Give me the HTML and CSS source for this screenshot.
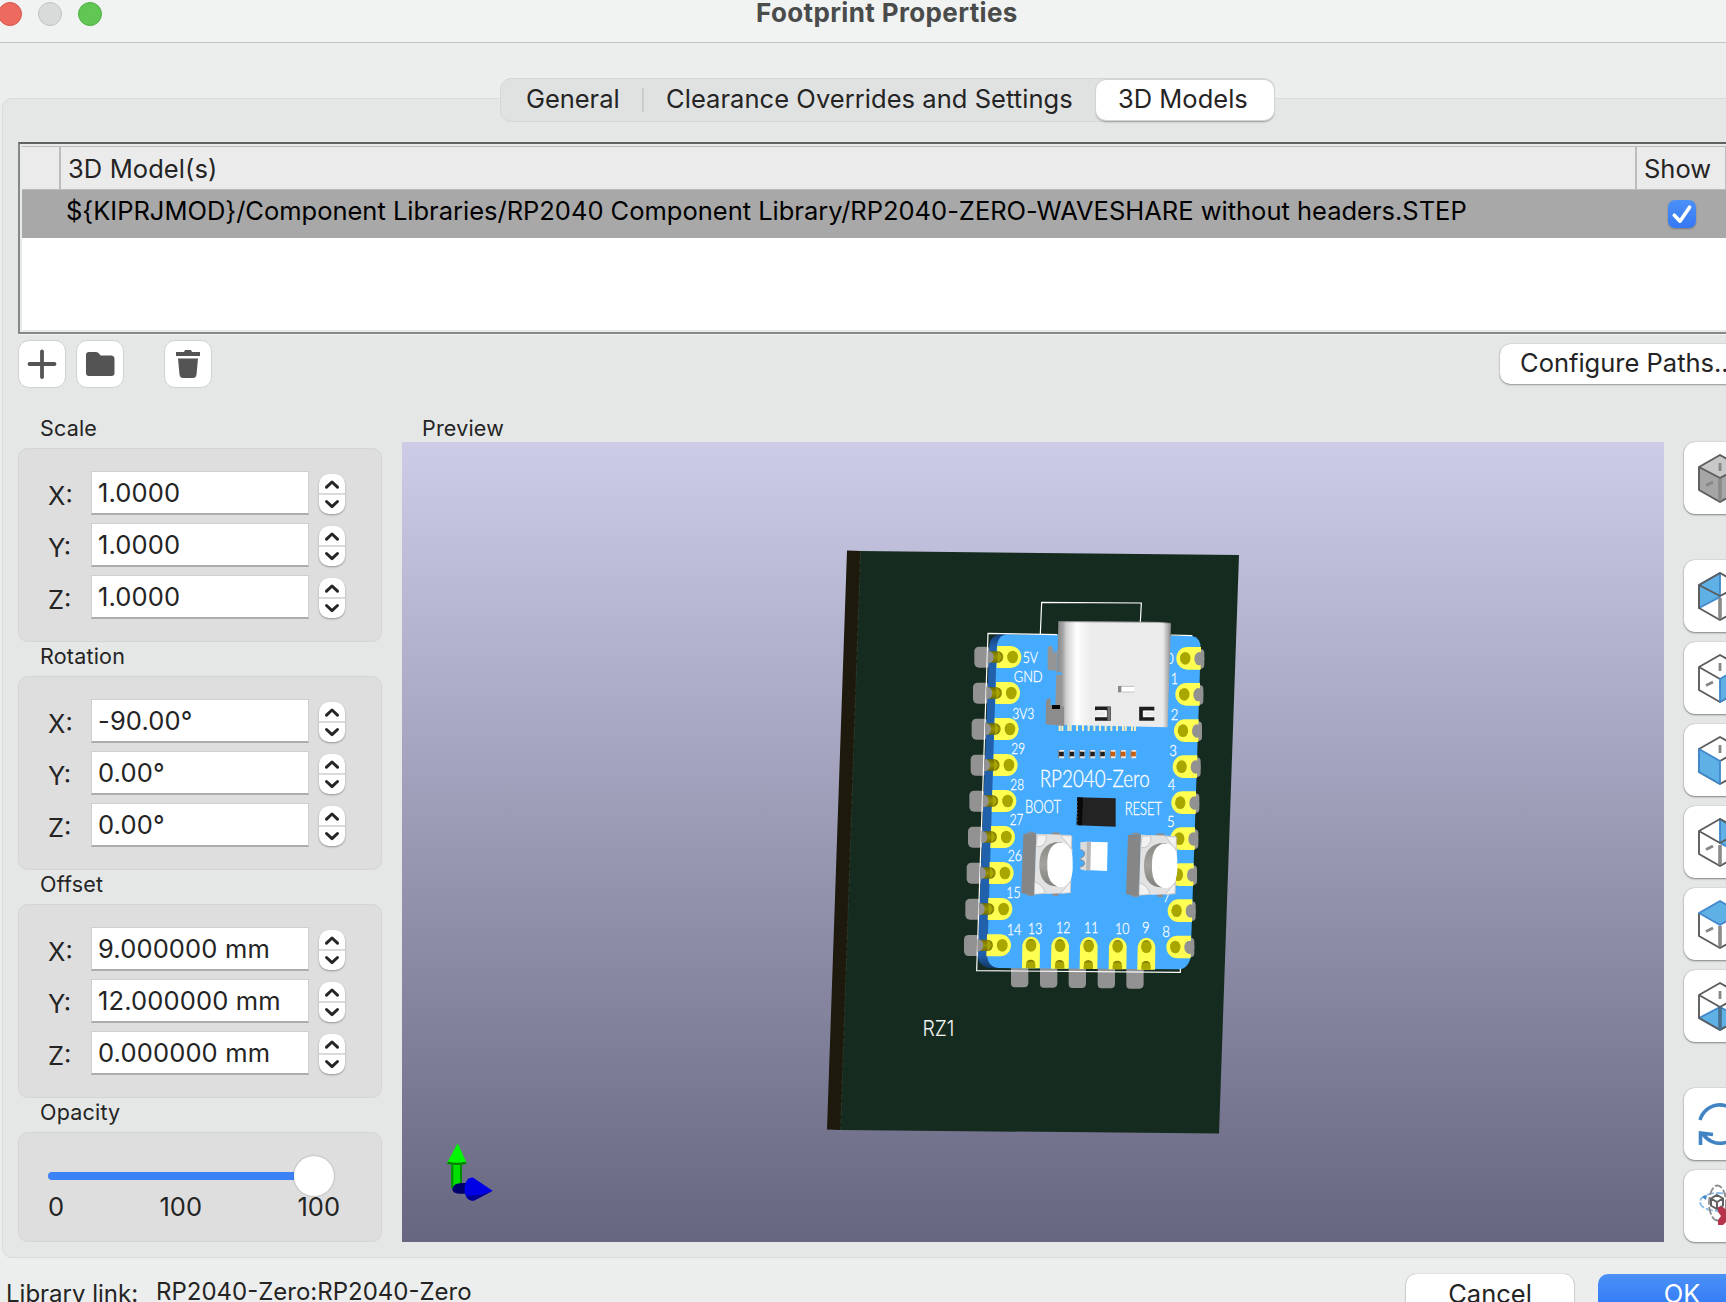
FILE: index.html
```html
<!DOCTYPE html>
<html lang="en">
<head>
<meta charset="utf-8">
<title>Footprint Properties</title>
<link rel="stylesheet" href="styles.css">
</head>
<body>
<svg class="defs" width="0" height="0" aria-hidden="true">
  <symbol id="step" viewBox="0 0 26 40"><path d="M0 20H26" stroke="#cfcfcf" stroke-width="1.6"/><path d="M7.5 13.2L13 8l5.500 5.200M7.500 27.500L13 32.700l5.500-5.200" fill="none" stroke="#262626" stroke-width="3" stroke-linecap="round" stroke-linejoin="round"/></symbol>
</svg>
<div class="window">
  <header class="titlebar">
    <div class="lights"><i class="red"></i><i class="grey"></i><i class="green"></i></div>
    <h1>Footprint Properties</h1>
  </header>

  <nav class="tabs">
    <button class="tab general">General</button>
    <span class="tab-sep"></span>
    <button class="tab clearance">Clearance Overrides and Settings</button>
    <button class="tab selected">3D Models</button>
  </nav>

  <main class="panel">
    <section class="grid">
      <div class="grid-head"><span class="c0"></span><span class="c1">3D Model(s)</span><span class="c2">Show</span></div>
      <div class="grid-row"><span class="path">${KIPRJMOD}/Component Libraries/RP2040 Component Library/RP2040-ZERO-WAVESHARE without headers.STEP</span>
        <span class="check"><svg width="28" height="28" viewBox="0 0 28 28"><path d="M6.300 15.200L12 21.200L21.600 7.200" fill="none" stroke="#fff" stroke-width="3.600" stroke-linecap="round" stroke-linejoin="round"/></svg></span></div>
    </section>

    <div class="toolbar">
      <button class="tool"><svg width="48" height="48" viewBox="0 0 48 48"><path d="M24 11.500V37M11.500 24H36.500" stroke="#545454" stroke-width="3.800" stroke-linecap="round"/></svg></button>
      <button class="tool"><svg width="48" height="48" viewBox="0 0 48 48"><path d="M10 15q0-3 3-3h7q2 0 3 1.500l1.500 2H35q3.500 0 3.500 3.500V33q0 3-3 3H13q-3 0-3-3Z" fill="#545454"/></svg></button>
      <button class="tool trash"><svg width="48" height="48" viewBox="0 0 48 48"><path d="M12 12h8l1-2h6l1 2h8v4H12ZM14 18.500h20l-1.500 16q-.4 3.500-3.500 3.500H19q-3 0-3.500-3.500Z" fill="#545454"/></svg></button>
      <button class="configure">Configure Paths...</button>
    </div>

    <div class="body">
      <aside class="params">
        <h2>Scale</h2>
        <div class="group">
          <label><b>X:</b><span class="field">1.0000</span><svg class="stepper"><use href="#step"/></svg></label>
          <label><b>Y:</b><span class="field">1.0000</span><svg class="stepper"><use href="#step"/></svg></label>
          <label><b>Z:</b><span class="field">1.0000</span><svg class="stepper"><use href="#step"/></svg></label>
        </div>
        <h2>Rotation</h2>
        <div class="group">
          <label><b>X:</b><span class="field">-90.00°</span><svg class="stepper"><use href="#step"/></svg></label>
          <label><b>Y:</b><span class="field">0.00°</span><svg class="stepper"><use href="#step"/></svg></label>
          <label><b>Z:</b><span class="field">0.00°</span><svg class="stepper"><use href="#step"/></svg></label>
        </div>
        <h2>Offset</h2>
        <div class="group">
          <label><b>X:</b><span class="field">9.000000 mm</span><svg class="stepper"><use href="#step"/></svg></label>
          <label><b>Y:</b><span class="field">12.000000 mm</span><svg class="stepper"><use href="#step"/></svg></label>
          <label><b>Z:</b><span class="field">0.000000 mm</span><svg class="stepper"><use href="#step"/></svg></label>
        </div>
        <h2>Opacity</h2>
        <div class="group opacity">
          <div class="slider"><span class="track"></span><span class="knob"></span></div>
          <div class="ticks"><span>0</span><span>100</span><span>100</span></div>
        </div>
      </aside>

      <section class="preview">
        <h2>Preview</h2>
        <svg class="canvas" width="1262" height="800" viewBox="402 442 1262 800">
          <defs>
            <linearGradient id="sky" x2="0" y2="1"><stop stop-color="#cccce8"/><stop offset="1" stop-color="#666680"/></linearGradient>
            <linearGradient id="shell"><stop stop-color="#7e7e7e"/><stop offset=".06" stop-color="#a4a4a4"/><stop offset=".09" stop-color="#d0d0d0"/><stop offset=".18" stop-color="#fff"/><stop offset=".24" stop-color="#f4f4f4"/><stop offset=".3" stop-color="#ececec"/><stop offset=".93" stop-color="#ebebeb"/><stop offset=".97" stop-color="#b4b4b4"/><stop offset="1" stop-color="#858585"/></linearGradient>
            <linearGradient id="cap" x2="0" y2="1"><stop stop-color="#8a8a86"/><stop offset=".5" stop-color="#a3a29c"/><stop offset="1" stop-color="#80807c"/></linearGradient>
            <linearGradient id="tube" x2="0" y2="1"><stop stop-color="#6f6c00"/><stop offset=".5" stop-color="#989400"/><stop offset="1" stop-color="#6f6c00"/></linearGradient>
            <linearGradient id="edge" x2="0" y2="1"><stop stop-color="#123e78"/><stop offset=".04" stop-color="#2160ab"/><stop offset=".96" stop-color="#2160ab"/><stop offset="1" stop-color="#123866"/></linearGradient>
            <g id="lp">
              <path d="M-46 -33H-6A32 33 0 0 1 -6 33H-48Z" fill="#ffff52"/>
              <path d="M-72 -17H-44A16 17 0 0 1 -44 17H-72Z" fill="url(#tube)"/>
              <path d="M-45 -16A15 17 0 0 1 -45 16Z" fill="#aaa600"/>
              <path d="M-75 -19Q-57 -17 -57 0T-75 19Z" fill="#929292"/>
              <ellipse rx="16" ry="19" fill="#aaa600"/><path d="M-8 -16A16 19 0 0 0 -8 16A22 22 0 0 1 -8 -16Z" fill="#827e00"/>
            </g>
            <g id="lg"><rect x="-115" y="-31" width="50" height="63" rx="14" fill="#929292"/></g>
            <g id="rg"><rect x="24" y="-28" width="33" height="59" rx="12" fill="#929292"/></g>
            <g id="rp">
              <path d="M6 -34H47L46 34H6A33 34 0 0 1 6 -34Z" fill="#ffff52"/>
              <ellipse cx="42" cy="1" rx="15" ry="20" fill="#929292"/>
              <ellipse rx="15.500" ry="19" fill="#aaa600"/><path d="M-8 -16A16 19 0 0 0 -8 16A22 22 0 0 1 -8 -16Z" fill="#827e00"/>
            </g>
            <g id="bp">
              <path d="M-26 0A27 33 0 0 1 27 0L26 69H-27Z" fill="#ffff52"/>
              <ellipse rx="16" ry="19" fill="#aaa600"/><path d="M-15 69Q-18 44 -1 43Q16 44 13 69Z" fill="#aaa600"/>
              <path d="M-13 -11A16 19 0 0 1 13 -11A18 14 0 0 0 -13 -11ZM-14 52Q-12 44 -1 43Q10 44 12 52Q0 45 -14 52Z" fill="#827e00"/>
            </g>
            <g id="bg"><path d="M-60 66H-8V113Q-9 126 -20 126H-49Q-60 126 -60 114Z" fill="#929292"/></g>
            <g id="sw">
              <path d="M200 730q2-7 20-5l6 5M272 734q2-10 28-6v8M197 910q2 10 24 8v-9M275 910q0 11 20 8v-9" fill="#8e8e8e"/>
              <path d="M190 732L229 729L223 915L184 910Z" fill="#868686"/>
              <path d="M229 731L333 735L337 780L332 909L223 913Z" fill="#e2e2e2"/>
              <path d="M232 735H258Q263 750 250 765Q240 772 228 770ZM302 736L336 738L334 776ZM224 876Q246 880 257 910L223 913ZM332 874L331 908L301 911Z" fill="#f2f2f2" stroke="#b4b4b4" stroke-width="2"/>
              <path d="M305 757H284Q238 768 238 824T280 888L305 891Z" fill="url(#cap)"/>
              <path d="M294 758H310Q338 768 338 812V838Q335 884 308 891H294Q264 880 262 838V812Q264 768 294 758Z" fill="#fff"/>
            </g>
          </defs>
          <rect x="402" y="442" width="1262" height="800" fill="url(#sky)"/>
          <path d="M847 550.500L861 551L841 1130L827 1129.500Z" fill="#1d190c"/>
          <path d="M860.500 551L1239 555L1219 1133.500L840.500 1130Z" fill="#162b1f"/>
          <path d="M860.500 551L840.500 1130" stroke="#39402f" stroke-width=".6" stroke-dasharray="5 3"/>
          <text class="silk" x="922.500" y="1035.500" font-size="22" textLength="32" lengthAdjust="spacingAndGlyphs">RZ1</text>

          <g transform="translate(960 590) scale(.33333)">
            <use href="#lg" x="158" y="201"/><use href="#lg" x="154" y="309"/><use href="#lg" x="150" y="417"/><use href="#lg" x="147" y="525"/><use href="#lg" x="143" y="633"/><use href="#lg" x="139" y="741"/><use href="#lg" x="135" y="849"/><use href="#lg" x="131" y="957"/><use href="#lg" x="127" y="1066"/>
            <use href="#rg" x="676" y="205"/><use href="#rg" x="673" y="313"/><use href="#rg" x="669" y="422"/><use href="#rg" x="665" y="530"/><use href="#rg" x="661" y="638"/><use href="#rg" x="658" y="746"/><use href="#rg" x="654" y="854"/><use href="#rg" x="650" y="962"/><use href="#rg" x="646" y="1071"/>
            <use href="#bg" x="213" y="1066"/><use href="#bg" x="300" y="1067"/><use href="#bg" x="386" y="1068"/><use href="#bg" x="473" y="1069"/><use href="#bg" x="559" y="1070"/>
            <path d="M88 165Q92 133 130 132L160 133L115 1134H85Q53 1125 53 1095Z" fill="url(#edge)"/>
            <path d="M110 175Q112 133 145 133L695 137Q722 142 722 175L692 1100Q685 1137 655 1138L115 1134Q82 1130 82 1095Z" fill="#45abff"/>
            <path d="M292 134L84 130L50 1142L661 1147V1136M697 137L632 135M241 132L245 37L544 39L541 97" fill="none" stroke="#fff" stroke-width="3.600"/>
            <use href="#lp" x="158" y="201"/><use href="#lp" x="154" y="309"/><use href="#lp" x="150" y="417"/><use href="#lp" x="147" y="525"/><use href="#lp" x="143" y="633"/><use href="#lp" x="139" y="741"/><use href="#lp" x="135" y="849"/><use href="#lp" x="131" y="957"/><use href="#lp" x="127" y="1066"/>
            <use href="#rp" x="676" y="205"/><use href="#rp" x="673" y="313"/><use href="#rp" x="669" y="422"/><use href="#rp" x="665" y="530"/><use href="#rp" x="661" y="638"/><use href="#rp" x="658" y="746"/><use href="#rp" x="654" y="854"/><use href="#rp" x="650" y="962"/><use href="#rp" x="646" y="1071"/>
            <use href="#bp" x="213" y="1066"/><use href="#bp" x="300" y="1067"/><use href="#bp" x="386" y="1068"/><use href="#bp" x="473" y="1069"/><use href="#bp" x="559" y="1070"/>

            <g class="legend" font-size="49">
              <text x="188" y="219" textLength="46" lengthAdjust="spacingAndGlyphs">5V</text>
              <text x="161" y="275" textLength="87" lengthAdjust="spacingAndGlyphs">GND</text>
              <text x="157" y="386" textLength="66" lengthAdjust="spacingAndGlyphs">3V3</text>
              <text x="154" y="491" textLength="41" lengthAdjust="spacingAndGlyphs">29</text>
              <text x="151" y="599" textLength="41" lengthAdjust="spacingAndGlyphs">28</text>
              <text x="149" y="706" textLength="41" lengthAdjust="spacingAndGlyphs">27</text>
              <text x="143" y="814" textLength="43" lengthAdjust="spacingAndGlyphs">26</text>
              <text x="139" y="924" textLength="43" lengthAdjust="spacingAndGlyphs">15</text>
              <text x="140" y="1036" textLength="44" lengthAdjust="spacingAndGlyphs">14</text>
              <text x="203" y="1031" textLength="44" lengthAdjust="spacingAndGlyphs">13</text>
              <text x="288" y="1030" textLength="43" lengthAdjust="spacingAndGlyphs">12</text>
              <text x="372" y="1030" textLength="43" lengthAdjust="spacingAndGlyphs">11</text>
              <text x="465" y="1031" textLength="43" lengthAdjust="spacingAndGlyphs">10</text>
              <text x="546" y="1028" textLength="23" lengthAdjust="spacingAndGlyphs">9</text>
              <text x="607" y="1040" textLength="23" lengthAdjust="spacingAndGlyphs">8</text>
              <text x="609" y="935" textLength="22" lengthAdjust="spacingAndGlyphs">7</text>
              <text x="621" y="712" textLength="23" lengthAdjust="spacingAndGlyphs">5</text>
              <text x="623" y="600" textLength="23" lengthAdjust="spacingAndGlyphs">4</text>
              <text x="628" y="497" textLength="23" lengthAdjust="spacingAndGlyphs">3</text>
              <text x="632" y="389" textLength="23" lengthAdjust="spacingAndGlyphs">2</text>
              <text x="632" y="281" textLength="22" lengthAdjust="spacingAndGlyphs">1</text>
              <text x="618" y="221" textLength="23" lengthAdjust="spacingAndGlyphs">0</text>
              <text x="239" y="590" font-size="69" textLength="330" lengthAdjust="spacingAndGlyphs">RP2040-Zero</text>
              <text x="195" y="669" font-size="53" textLength="108" lengthAdjust="spacingAndGlyphs">BOOT</text>
              <text x="494" y="676" font-size="53" textLength="112" lengthAdjust="spacingAndGlyphs">RESET</text>
            </g>

            <path d="M299 405v18M307 405v18M325 405v18M332 405v18M351 405v18M369 405v18M386 405v18M403 405v18M420 405v18M437 405v18M454 405v18M471 405v18M489 405v18M497 405v18M516 405v18M525 405v18" stroke="#f2edbe" stroke-width="6"/>
            <path d="M295 94L600 96L633 100L623 412L288 404V345L292 240Z" fill="url(#shell)"/>
            <path d="M263 178Q262 166 277 168L279 179L306 181V188H292V242H305V352H286V345L289 255L290 242L263 240Z" fill="#959595"/>
            <path d="M279 187H292V182L279 180ZM290 247H305V254H290Z" fill="#45abff"/>
            <path d="M258 333Q261 323 272 325V345H300L312 352V408L257 403Z" fill="#8c8c8c"/>
            <rect x="276" y="345" width="24" height="12" fill="#080808"/>
            <path d="M295 95L600 97L632 100" stroke="#777" stroke-width="2" fill="none"/>
            <path d="M405 355H447V387H405M583 356H543V387H583" fill="none" stroke="#1e1e1e" stroke-width="11"/>
            <path d="M447 350V392" stroke="#777" stroke-width="9"/>
            <path d="M410 362H436V378H410M578 364H552V379H578" fill="none" stroke="#fff" stroke-width="3"/>
            <path d="M475 289H523M486 306H523" stroke="#aaa" stroke-width="2"/><path d="M484 291H523V304H484Z" fill="#fff"/><path d="M474 288H484V307H474Z" fill="#888"/>

            <path d="M304 480v25M335 480v25M366 480v25M397 480v25M427 480v25M458 480v25M489 480v25M520 480v25" stroke="#e8e8e8" stroke-width="17"/>
            <path d="M304 485v14M335 485v14M366 485v14M397 485v14M427 485v14" stroke="#202020" stroke-width="15"/>
            <path d="M458 485v14M489 485v14M520 485v14" stroke="#c85c10" stroke-width="15"/>
            <path d="M296 480v25M328 480v25M359 480v25M390 480v25M420 480v25M451 480v25M482 480v25M513 480v25" stroke="#777" stroke-width="3"/>
            <path d="M352 622L467 625V710L350 706Z" fill="#232323"/><path d="M352 622L369 623L366 706L350 705Z" fill="#090909"/><path d="M352 635v70" stroke="#666" stroke-width="3" stroke-dasharray="4 7"/>
            <path d="M378 755L443 757L441 843L376 840Z" fill="#fff"/>
            <path d="M361 757L380 755L378 842L361 838V831Q374 828 374 820T361 808V805Q374 801 374 791T361 779Z" fill="#dcdcdc"/><path d="M380 755H393L391 841H378Z" fill="#b8b8b8"/>
            <path d="M361 831Q374 828 374 820T361 808M361 805Q374 801 374 791T361 779" fill="none" stroke="#8a8a8a" stroke-width="3"/>
            <use href="#sw"/><use href="#sw" x="314" y="3"/>
          </g>

          <g transform="translate(0 860) scale(.33333)">
            <path d="M1354 908H1386V980Q1370 992 1354 984Z" fill="#00e000"/><path d="M1354 908H1360V985H1354ZM1380 908H1386V976H1380Z" fill="#008c00"/>
            <path d="M1373 850L1401 911Q1371 919 1340 911Z" fill="#00f800"/><path d="M1340 911Q1371 919 1401 911L1396 905Q1371 911 1345 905Z" fill="#087c08"/>
            <path d="M1357 988Q1360 969 1385 969H1410V1001H1380Q1359 1002 1357 988Z" fill="#00006c"/>
            <path d="M1478 992L1424 1021Q1395 1026 1393 988Q1395 950 1420 953Z" fill="#0000e6"/><path d="M1478 992L1424 1021Q1405 1026 1398 1006Q1430 1010 1478 992Z" fill="#000094"/>
          </g>
        </svg>
      </section>

      <aside class="views">
        <button><svg viewBox="0 0 72 72"><path d="M36 13L57 25V48L36 60L15 48V25Z" fill="#a6a6a6"/><path d="M36 13L57 25L36 36L15 25Z" fill="#c8c8c8"/><path class="ln" d="M36 13L57 25V48L36 60L15 48V25ZM15 25L36 36L57 25"/><path class="mid" d="M36 37V59"/><path class="dash" d="M36 21V29M22 43.500L29 40"/></svg></button>
        <button class="gap"><svg viewBox="0 0 72 72"><path class="blue" d="M15 25L36 13V37L15 48Z"/><path class="ln" d="M36 13L57 25V48L36 60L15 48V25ZM15 25L36 36L57 25"/><path class="mid" d="M36 38V59"/></svg></button>
        <button><svg viewBox="0 0 72 72"><path class="ln" d="M36 13L57 25V48L36 60L15 48V25ZM15 25L36 37"/><path class="dash" d="M36 21V29M22 43.500L29 40"/><path class="blue" d="M36 37L57 25V48L36 60Z"/></svg></button>
        <button><svg viewBox="0 0 72 72"><path class="ln" d="M36 13L57 25V48L36 60L15 48V25ZM36 37L57 25"/><path class="dash" d="M36 21V29"/><path class="blue" d="M15 25L36 37V60L15 48Z"/></svg></button>
        <button><svg viewBox="0 0 72 72"><path class="blue" d="M36 13L57 25V48L36 37Z"/><path class="ln" d="M36 13L57 25V48L36 60L15 48V25ZM15 25L36 37L57 25"/><path class="mid" d="M36 39V59"/><path class="dash" d="M22 43.500L29 40"/></svg></button>
        <button><svg viewBox="0 0 72 72"><path class="ln" d="M15 25V48L36 60L57 48V25"/><path class="mid" d="M36 38V59"/><path class="dash" d="M22 43.500L29 40"/><path class="blue" d="M36 13L57 25L36 37L15 25Z"/></svg></button>
        <button><svg viewBox="0 0 72 72"><path class="blue" d="M36 37L57 48L36 60L15 48Z"/><path class="ln" d="M36 13L57 25V48L36 60L15 48V25ZM15 25L36 37L57 25"/><path d="M36 37V60" stroke="#47708c" stroke-width="3.600"/><path class="dash" d="M36 21V29"/></svg></button>
        <button class="gap"><svg viewBox="0 0 72 72"><path d="M16 32A20.500 20.500 0 0 1 54 28M56 40A20.500 20.500 0 0 1 19 46M16.500 57V45L29 46.500" fill="none" stroke="#4084c4" stroke-width="3.600"/></svg></button>
        <button><svg viewBox="0 0 72 72"><ellipse cx="34" cy="32" rx="18" ry="9" fill="none" stroke="#8abbe6" stroke-width="1.800" stroke-dasharray="7 2"/><path d="M18 27l5-2-1 5Z" fill="#4084c4"/><ellipse cx="33.500" cy="33" rx="8.500" ry="17.500" fill="none" stroke="#8d8d8d" stroke-width="1.800" stroke-dasharray="8 2"/><path d="M33 25l6 3.500v7l-6 3.500-6-3.500v-7ZM27 28.500l6 3.500 6-3.500M33 32v7" fill="none" stroke="#606060" stroke-width="2"/><path d="M34 37h5l4 4 4-4h5v6l-3 3 3 4v5h-5l-4-4-4 4h-5v-5l3-4-3-4Z" fill="#b5344a"/></svg></button>
      </aside>
    </div>
  </main>

  <footer class="footer">
    <span class="link-label">Library link:</span><span class="link">RP2040-Zero:RP2040-Zero</span>
    <button class="cancel">Cancel</button><button class="ok">OK</button>
  </footer>
</div>
</body>
</html>
```
FILE: styles.css
```css
* { box-sizing: border-box; }
html, body { margin: 0; width: 1726px; height: 1302px; overflow: hidden; }
body { font-family: Inter, "Liberation Sans", sans-serif; font-size: 25.5px; color: #242424; background: #eceeed; }
.defs { display: block; position: absolute; }
button { font: inherit; color: inherit; border: 0; padding: 0; margin: 0; background: none; white-space: nowrap; }
h1, h2 { margin: 0; }
.window { width: 1774px; height: 1330px; display: flex; flex-direction: column; }

.titlebar { flex: none; height: 43px; background: #f1f3f2; border-bottom: 1px solid #c3c5c4; display: flex; }
.lights { display: flex; gap: 16px; margin: 2px 0 0 -2px; width: 758px; }
.lights i { width: 24px; height: 24px; border-radius: 50%; border: 1px solid; }
.lights .red { background: #ed6a5f; border-color: #d9554b; }
.lights .grey { background: #d9dada; border-color: #c2c3c3; }
.lights .green { background: #62c655; border-color: #4fae42; }
.titlebar h1 { font-size: 26px; font-weight: 700; line-height: 26px; color: #4a4b4b; letter-spacing: .37px; white-space: nowrap; }

.tabs { flex: none; width: 775px; height: 44px; margin: 35px 0 0 500px; border: 1px solid #d5d7d6; border-radius: 11px; background: #e0e2e1; display: flex; align-items: center; position: relative; z-index: 1; }
.tab { height: 40px; text-align: left; padding-bottom: 3px; }
.general { width: 141px; padding-left: 25px; letter-spacing: -.05px; }
.tab-sep { width: 2px; height: 24px; background: #cbcdcc; }
.clearance { width: 452px; padding-left: 22px; letter-spacing: .05px; }
.selected { width: 178px; padding-left: 22px; background: #fff; border-radius: 10px; box-shadow: 0 0 0 1px #d2d4d3, 0 2px 2px #999; letter-spacing: 0; }

.panel { flex: none; height: 1160px; margin: -24px 0 0 2px; padding: 43px 0 0 15px; background: #e5e7e6; border: 1px solid #d9dbda; border-radius: 10px; }
.grid { width: 1740px; height: 192px; border: 2px solid #868887; border-top-color: #5f6161; border-bottom-color: #868887; padding: 2px; background: #fff; box-shadow: inset 0 0 0 2px #e8eae9, 0 1px 0 #f3f5f4; }
.grid-head { height: 44px; background: #ebebeb; border-top: 1px solid #bbb; border-bottom: 1px solid #bbb; display: flex; line-height: 43px; }
.c0 { width: 39px; border-right: 2px solid #bdbdbd; }
.c1 { width: 1576px; padding-left: 7px; border-right: 2px solid #bdbdbd; letter-spacing: .1px; }
.c2 { width: 89px; padding-left: 7px; border-right: 1px solid #bdbdbd; }
.grid-row { height: 48px; background: #a8a8a8; color: #000; display: flex; padding-left: 44px; }
.path { width: 1602px; line-height: 42px; letter-spacing: -.01px; white-space: nowrap; }
.check { width: 28px; height: 28px; margin-top: 10px; border-radius: 7px; background: linear-gradient(#4b91f7, #3577f4); box-shadow: 0 1px 2px #0004; }
.check svg { display: block; }

.toolbar { height: 48px; margin-top: 6px; display: flex; }
.tool { width: 48px; height: 48px; margin-right: 10px; background: #fff; border: 1px solid #cfd1d0; border-radius: 11px; overflow: hidden; }
.tool svg { display: block; margin: -1px; }
.trash { margin-left: 30px; margin-right: 1288px; }
.configure { width: 252px; height: 40px; margin-top: 4px; padding-left: 20px; text-align: left; line-height: 36px; padding-bottom: 2px; background: #fff; border-radius: 10px; box-shadow: 0 0 1px #0006, 0 1px 2px #0005; }

.body { display: flex; margin-top: 25px; }
.params { width: 364px; }
h2 { font-size: 21.500px; font-weight: 400; line-height: 29px; height: 34px; padding-left: 22px; letter-spacing: .2px; }
.params h2:first-child { height: 35px; line-height: 31px; }
.group { height: 194px; border: 1px solid #d3d5d4; border-radius: 10px; background: #dedede; padding: 22px 0 0 29px; }
.group label { display: flex; height: 44px; margin-bottom: 8px; }
.group b { font-weight: 400; width: 43px; line-height: 49px; }
.field { width: 218px; height: 44px; border: 1px solid #cfcfcf; border-bottom: 2px solid #acacac; background: #fff; padding-left: 6px; line-height: 41px; letter-spacing: .15px; white-space: nowrap; }
.stepper { width: 26px; height: 40px; margin: 3px 0 0 10px; background: #fff; border-radius: 10px; box-shadow: 0 1px 2px #0005; }
.opacity { height: 110px; padding: 23px 0 0 29px; }
.slider { display: flex; align-items: center; height: 40px; width: 290px; }
.track { width: 246px; height: 8px; border-radius: 4px 0 0 4px; background: #3b82f7; }
.knob { width: 40px; height: 40px; border-radius: 50%; background: #fff; box-shadow: 0 0 2px #0005; }
.ticks { display: flex; width: 292px; justify-content: space-between; line-height: 20px; margin-top: 1px; }

.preview { width: 1262px; margin-left: 20px; }
.preview h2 { height: 29px; line-height: 31px; padding-left: 20px; }
.canvas { display: block; }
.silk { font-family: Inter, sans-serif; font-weight: 300; fill: #f1f4f2; }
.legend { font-family: Lato, sans-serif; font-weight: 300; fill: #fff; stroke: #fff; stroke-width: .9px; }

.views { width: 72px; margin: 29px 0 0 20px; }
.views button { display: block; width: 72px; height: 72px; margin-bottom: 10px; background: #fff; border-radius: 11px; box-shadow: 0 0 1px #0006, 0 1px 2px #0006; }
.views .gap { margin-top: 46px; }
.views svg { display: block; width: 72px; height: 72px; }
.ln { fill: none; stroke: #5c5c5c; stroke-width: 1.900; stroke-linejoin: round; }
.mid { stroke: #8a8a8a; stroke-width: 3.600; }
.dash { stroke: #868686; stroke-width: 2.800; fill: none; }
.blue { fill: #5eb0e5; stroke: #4187c9; stroke-width: 1.800; stroke-linejoin: round; }

.footer { display: flex; padding: 16px 0 0 6px; flex: none; height: 80px; }
.link-label { width: 150px; font-size: 24px; line-height: 39px; white-space: nowrap; }
.link { width: 1250px; font-size: 24px; line-height: 36px; }
.cancel { width: 168px; height: 40px; background: #fff; border-radius: 10px; line-height: 37px; padding-bottom: 1px; box-shadow: 0 0 1px #0006, 0 1px 2px #0005; }
.ok { width: 168px; height: 40px; margin-left: 24px; border-radius: 10px; line-height: 37px; padding-bottom: 1px; color: #fff; background: linear-gradient(#4b91f7, #2f75f5); }
```
